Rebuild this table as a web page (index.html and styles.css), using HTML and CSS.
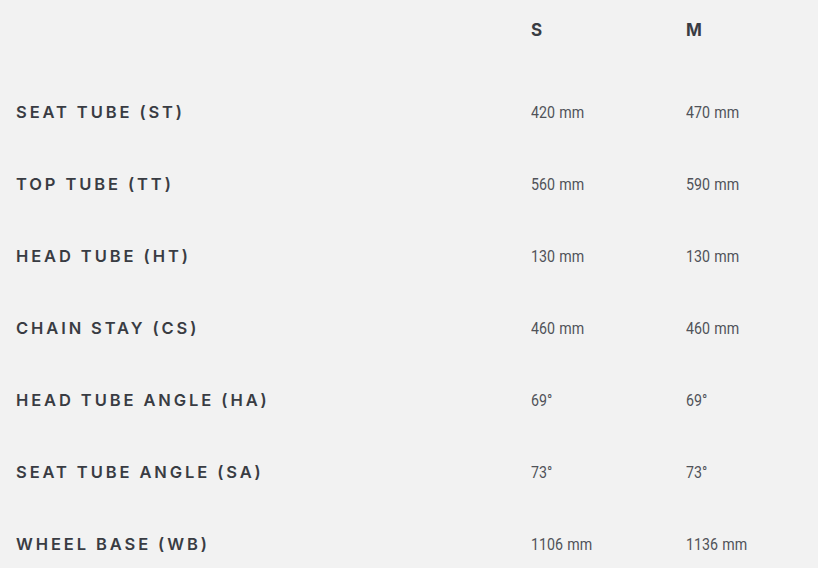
FILE: index.html
```html
<!DOCTYPE html>
<html>
<head>
<meta charset="utf-8">
<link rel="stylesheet" href="styles.css">
</head>
<body>
<div class="specs">
  <div class="row head">
    <div class="label"></div>
    <div class="size">S</div>
    <div class="size">M</div>
  </div>
  <div class="row">
    <div class="label">SEAT TUBE (ST)</div>
    <div class="val"><span>420 mm</span></div>
    <div class="val"><span>470 mm</span></div>
  </div>
  <div class="row">
    <div class="label">TOP TUBE (TT)</div>
    <div class="val"><span>560 mm</span></div>
    <div class="val"><span>590 mm</span></div>
  </div>
  <div class="row">
    <div class="label">HEAD TUBE (HT)</div>
    <div class="val"><span>130 mm</span></div>
    <div class="val"><span>130 mm</span></div>
  </div>
  <div class="row">
    <div class="label">CHAIN STAY (CS)</div>
    <div class="val"><span>460 mm</span></div>
    <div class="val"><span>460 mm</span></div>
  </div>
  <div class="row">
    <div class="label">HEAD TUBE ANGLE (HA)</div>
    <div class="val"><span>69°</span></div>
    <div class="val"><span>69°</span></div>
  </div>
  <div class="row">
    <div class="label">SEAT TUBE ANGLE (SA)</div>
    <div class="val"><span>73°</span></div>
    <div class="val"><span>73°</span></div>
  </div>
  <div class="row">
    <div class="label">WHEEL BASE (WB)</div>
    <div class="val"><span>1106 mm</span></div>
    <div class="val"><span>1136 mm</span></div>
  </div>
</div>
</body>
</html>
```
FILE: styles.css
```css
html, body {
  margin: 0;
  padding: 0;
  background: #f2f2f2;
}
body {
  width: 818px;
  height: 568px;
  overflow: hidden;
  font-family: "Inter", "Open Sans", "Liberation Sans", sans-serif;
  color: #393c43;
}
.specs {
  display: flex;
  flex-direction: column;
  padding-left: 16px;
}
.row {
  display: grid;
  grid-template-columns: 515px 155px 1fr;
  align-items: center;
  height: 72px;
}
.row.head {
  height: 60px;
  margin-bottom: 15px;
}
.label {
  font-size: 16.5px;
  font-weight: 600;
  letter-spacing: 2.9px;
  padding-top: 2px;
}
.size {
  font-size: 17px;
  font-weight: 700;
}
.val {
  font-family: "Roboto", "Liberation Sans", sans-serif;
  font-size: 16.5px;
  color: #505359;
  padding-top: 2px;
}
.val span {
  display: inline-block;
  transform: scaleX(0.86);
  transform-origin: left center;
  word-spacing: 1px;
}
```
